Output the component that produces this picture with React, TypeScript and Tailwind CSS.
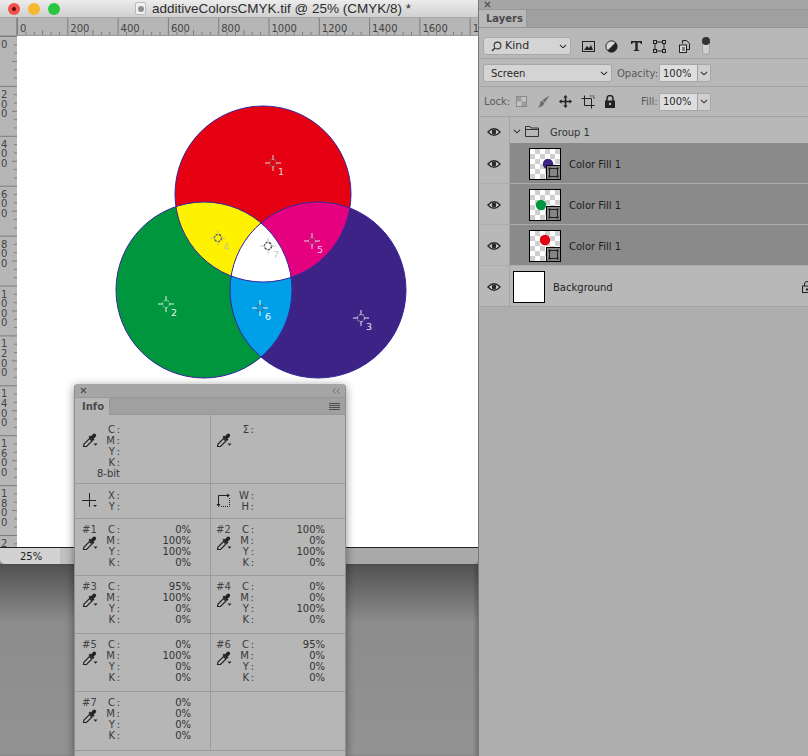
import React from "react";

const ui = "font-['DejaVu_Sans',sans-serif]";

const Eyedropper: React.FC = () => (
  <svg width="16" height="15" viewBox="0 0 16 15" className="block">
    <path d="M1.5 13.5 L2 11 L7.5 5.5 L10 8 L4.5 13.5 Z" fill="none" stroke="#222" strokeWidth="1.2" />
    <path d="M6.5 4 L8 2.5 L9 3.5 L11 1 Q12.5 0 13.7 1.2 Q15 2.5 13.5 4 L11.5 5.5 L12.5 6.5 L11 8 Z" fill="#222" />
    <path d="M11.5 10.5 H15.5 L13.5 12.8 Z" fill="#222" />
  </svg>
);

const Eye: React.FC = () => (
  <svg width="14" height="10" viewBox="0 0 14 10" className="block">
    <path d="M1 5 Q7 -1.5 13 5 Q7 11.5 1 5 Z" fill="#e4e4e4" stroke="#2a2a2a" strokeWidth="1.5" />
    <circle cx="7" cy="5" r="2.4" fill="#2a2a2a" />
  </svg>
);

const Chevron: React.FC<{ size?: number }> = ({ size = 8 }) => (
  <svg width={size} height={size * 0.6} viewBox="0 0 8 5" className="block shrink-0">
    <path d="M0.8 0.8 L4 4 L7.2 0.8" fill="none" stroke="#333" strokeWidth="1.1" />
  </svg>
);

const Checker: React.FC = () => (
  <div className="absolute inset-0 bg-white bg-[conic-gradient(#cfcfcf_25%,#ffffff_25%_50%,#cfcfcf_50%_75%,#ffffff_75%)] bg-[length:10px_10px]" />
);

const LayerRow: React.FC<{ color: string; cx: number; cy: number }> = ({ color, cx, cy }) => (
  <div className="flex h-[41px] border-b border-[#acacac]">
    <div className="w-[31px] bg-[#b8b8b8] flex items-center justify-center border-r border-[#a4a4a4] pt-[2px]">
      <Eye />
    </div>
    <div className="flex-1 bg-[#8a8a8a] flex items-center pl-[19px] pt-[1px]">
      <div className="relative w-[32px] h-[32px] border border-black overflow-hidden">
        <Checker />
        <svg width="30" height="30" viewBox="0 0 30 30" className="absolute inset-0">
          <circle cx={cx} cy={cy} r="5.2" fill={color} />
        </svg>
        <div className="absolute right-0 bottom-0 w-[14px] h-[14px] bg-[#858585] border-l border-t border-black flex items-center justify-center">
          <svg width="11" height="11" viewBox="0 0 11 11">
            <rect x="1.5" y="1.5" width="8" height="8" rx="0.5" fill="none" stroke="#222" strokeWidth="1" />
            <rect x="0.5" y="0.5" width="2" height="2" fill="#222" />
            <rect x="8.5" y="0.5" width="2" height="2" fill="#222" />
            <rect x="0.5" y="8.5" width="2" height="2" fill="#222" />
            <rect x="8.5" y="8.5" width="2" height="2" fill="#222" />
          </svg>
        </div>
      </div>
      <span className="ml-[8px] mt-[2px] text-[10px] text-[#1e1e1e]">Color Fill 1</span>
    </div>
  </div>
);

const LayersPanel: React.FC = () => (
  <div className={`${ui} w-[330px] h-full bg-[#adadad] border-l border-[#777] flex flex-col text-[#2a2a2a] shrink-0`}>
    <div className="h-[10px] bg-[#a6a6a6] pl-[5px] flex items-center border-b border-[#979797]">
      <svg width="7" height="7" viewBox="0 0 7 7">
        <path d="M1 1 L6 6 M6 1 L1 6" stroke="#555" strokeWidth="1.4" />
      </svg>
    </div>
    <div className="h-[18px] bg-[#a0a0a0] flex border-b border-[#979797]">
      <div className="w-[48px] bg-[#b8b8b8] text-[10px] leading-[12px] font-bold text-[#4a4a4a] flex items-center pl-[7px] pt-[1px] border-r border-[#979797]">
        Layers
      </div>
    </div>

    {/* filter row */}
    <div className="h-[31px] bg-[#b8b8b8] flex items-start pt-[9px] pl-[4px] border-b border-[#a2a2a2]">
      <div className="w-[88px] h-[18px] bg-[#d4d4d4] rounded-[3px] border border-[#a8a8a8] flex items-center pl-[7px] pr-[3px] text-[11px]">
        <svg width="11" height="11" viewBox="0 0 11 11" className="shrink-0">
          <circle cx="6.5" cy="4.5" r="3.4" fill="none" stroke="#333" strokeWidth="1.1" />
          <path d="M4 7 L1 10" stroke="#333" strokeWidth="1.4" />
        </svg>
        <span className="ml-[3px] flex-1">Kind</span>
        <Chevron />
      </div>
      <div className="ml-[11px] h-[18px] flex items-center">
        <svg width="13" height="11" viewBox="0 0 13 11">
          <rect x="0.5" y="0.5" width="12" height="10" fill="none" stroke="#222" />
          <path d="M2 9 L5 5 L7 7 L9 4 L11 9 Z" fill="#222" />
        </svg>
        <svg width="13" height="13" viewBox="0 0 13 13" className="ml-[10px]">
          <circle cx="6.5" cy="6.5" r="5.6" fill="#d8d8d8" stroke="#222" />
          <path d="M10.5 2.5 A5.6 5.6 0 0 1 2.5 10.5 Z" fill="#222" />
        </svg>
        <svg width="13" height="12" viewBox="0 0 13 12" className="ml-[12px]">
          <path d="M1 1 H12 V4 H11 L10 2.5 H7.7 V9.8 L9.3 10.3 V11 H3.7 V10.3 L5.3 9.8 V2.5 H3 L2 4 H1 Z" fill="#222" />
        </svg>
        <svg width="13" height="13" viewBox="0 0 13 13" className="ml-[10px]">
          <rect x="2" y="2" width="9" height="9" fill="none" stroke="#222" />
          <rect x="0.5" y="0.5" width="3" height="3" fill="#b8b8b8" stroke="#222" />
          <rect x="9.5" y="0.5" width="3" height="3" fill="#b8b8b8" stroke="#222" />
          <rect x="0.5" y="9.5" width="3" height="3" fill="#b8b8b8" stroke="#222" />
          <rect x="9.5" y="9.5" width="3" height="3" fill="#b8b8b8" stroke="#222" />
        </svg>
        <svg width="11" height="13" viewBox="0 0 11 13" className="ml-[13px]">
          <path d="M3.5 3.5 V0.5 H7.5 L10.5 3.5 V9.5 H7.5" fill="none" stroke="#222" />
          <rect x="0.5" y="5" width="7" height="7.5" fill="#d8d8d8" stroke="#222" />
          <path d="M3 8 H6 M3 10 H6" stroke="#222" />
        </svg>
      </div>
      <div className="relative ml-[12px] w-[8px] h-[18px] rounded-[4px] bg-[#cfcfcf] border border-[#a0a0a0]">
        <div className="absolute -top-[1px] -left-[1px] w-[8px] h-[8px] rounded-full bg-[#333]" />
      </div>
    </div>

    {/* blend row */}
    <div className="h-[28px] bg-[#b8b8b8] flex items-center pl-[4px] pt-[1px] border-b border-[#a2a2a2]">
      <div className="w-[129px] h-[18px] bg-[#d4d4d4] rounded-[3px] border border-[#a8a8a8] flex items-center pl-[7px] pr-[3px] text-[10px]">
        <span className="flex-1">Screen</span>
        <Chevron />
      </div>
      <span className="ml-[5px] w-[42px] text-[10px] text-[#5a5a5a]">Opacity:</span>
      <div className="w-[52px] h-[18px] flex border border-[#a8a8a8] rounded-[2px]">
        <div className="w-[37px] bg-[#dedede] text-[10px] pl-[3px] flex items-center">100%</div>
        <div className="flex-1 bg-[#cfcfcf] border-l border-[#a0a0a0] flex items-center justify-center">
          <Chevron />
        </div>
      </div>
    </div>

    {/* lock row */}
    <div className="h-[30px] bg-[#b8b8b8] flex items-center pl-[5px] border-b border-[#a2a2a2] text-[10px]">
      <span className="w-[32px] text-[#5a5a5a]">Lock:</span>
      <svg width="11" height="11" viewBox="0 0 11 11">
        <rect x="0.5" y="0.5" width="10" height="10" fill="#c4c4c4" stroke="#8a8a8a" />
        <path d="M1 1 H5.5 V5.5 H1 Z M5.5 5.5 H10 V10 H5.5 Z" fill="#9c9c9c" />
      </svg>
      <svg width="13" height="13" viewBox="0 0 13 13" className="ml-[10px]">
        <path d="M12.5 0.5 L5.5 5 L8 7.5 Z" fill="#6e6e6e" />
        <path d="M5 5.5 L7.5 8 Q6 12 0.5 12.5 Q3 10.5 3 8.5 Q3 6.5 5 5.5 Z" fill="#6e6e6e" />
      </svg>
      <svg width="13" height="13" viewBox="0 0 13 13" className="ml-[9px]">
        <path d="M6.5 0 L8.7 2.5 H7.3 V5.7 H10.5 V4.3 L13 6.5 L10.5 8.7 V7.3 H7.3 V10.5 H8.7 L6.5 13 L4.3 10.5 H5.7 V7.3 H2.5 V8.7 L0 6.5 L2.5 4.3 V5.7 H5.7 V2.5 H4.3 Z" fill="#222" />
      </svg>
      <svg width="14" height="14" viewBox="0 0 14 14" className="ml-[9px]">
        <path d="M3.5 0.5 V10.5 H13.5 M0.5 3.5 H10.5 V13.5" fill="none" stroke="#222" />
        <path d="M9 1 L13 1 L13 4" fill="none" stroke="#222" strokeDasharray="1.5 1" />
      </svg>
      <svg width="12" height="13" viewBox="0 0 12 13" className="ml-[9px]">
        <path d="M3 6 V3.5 A3 3 0 0 1 9 3.5 V6" fill="none" stroke="#222" strokeWidth="1.5" />
        <rect x="1" y="5.5" width="10" height="7.5" fill="#222" />
        <circle cx="6" cy="9" r="1.2" fill="#b8b8b8" />
      </svg>
      <span className="ml-[25px] w-[18px] text-[#5a5a5a]">Fill:</span>
      <div className="w-[52px] h-[18px] flex border border-[#a8a8a8] rounded-[2px]">
        <div className="w-[37px] bg-[#dedede] pl-[3px] flex items-center">100%</div>
        <div className="flex-1 bg-[#cfcfcf] border-l border-[#a0a0a0] flex items-center justify-center">
          <Chevron />
        </div>
      </div>
    </div>

    {/* group */}
    <div className="flex h-[26px]">
      <div className="w-[31px] bg-[#b8b8b8] flex items-center justify-center border-r border-[#a4a4a4] pt-[3px]">
        <Eye />
      </div>
      <div className="flex-1 bg-[#b8b8b8] flex items-center pl-[3px] pt-[3px]">
        <Chevron />
        <svg width="14" height="11" viewBox="0 0 14 11" className="ml-[4px]">
          <path d="M0.5 10.5 V0.5 H5 L6 2 H13.5 V10.5 Z M0.5 3.5 H13.5" fill="none" stroke="#333" />
        </svg>
        <span className="ml-[11px] mt-[1px] text-[10px] text-[#333]">Group 1</span>
      </div>
    </div>

    <LayerRow color="#3c2385" cx={18} cy={15} />
    <LayerRow color="#00963e" cx={11} cy={15} />
    <LayerRow color="#e50012" cx={15} cy={9} />

    <div className="flex h-[41px] bg-[#b8b8b8] border-b border-[#a4a4a4]">
      <div className="w-[31px] flex items-center justify-center border-r border-[#a4a4a4] pt-[2px]">
        <Eye />
      </div>
      <div className="flex-1 flex items-center pl-[3px] pt-[1px] relative">
        <div className="w-[32px] h-[32px] bg-white border border-black" />
        <span className="ml-[8px] mt-[2px] text-[10px] text-[#1e1e1e]">Background</span>
        <svg width="10" height="12" viewBox="0 0 10 12" className="absolute right-[-4px] top-[15px]">
          <path d="M2.5 5 V3 A2.5 2.5 0 0 1 7.5 3 V5" fill="none" stroke="#222" />
          <rect x="0.5" y="5" width="9" height="6.5" fill="none" stroke="#222" />
          <rect x="4" y="7.5" width="2" height="2" fill="#222" />
        </svg>
      </div>
    </div>
  </div>
);

const marks = [
  { n: 1, x: 273, y: 163, c: "#f0d0d0", d: "#7a5a5a" },
  { n: 2, x: 166, y: 304, c: "#e8f4ec", d: "#5cb080" },
  { n: 3, x: 361, y: 318, c: "#e4e0f0", d: "#8a86a0" },
  { n: 4, x: 218, y: 238, c: "#c9c48c", d: "#555" },
  { n: 5, x: 312, y: 241, c: "#f2cfe2", d: "#8a5a78" },
  { n: 6, x: 260, y: 308, c: "#eef8ff", d: "#2f6f90" },
  { n: 7, x: 268, y: 246, c: "#c8c8c8", d: "#444" },
];

const Rgb: React.FC = () => (
  <svg viewBox="17 36 461 511" width="461" height="511" className="block">
    <defs>
      <clipPath id="r"><circle cx="263" cy="194" r="88" /></clipPath>
      <clipPath id="g"><circle cx="204" cy="290" r="88" /></clipPath>
      <clipPath id="b"><circle cx="318" cy="290" r="88" /></clipPath>
    </defs>
    <circle cx="263" cy="194" r="88" fill="#e50012" />
    <circle cx="204" cy="290" r="88" fill="#00963e" />
    <circle cx="318" cy="290" r="88" fill="#3c2385" />
    <g clipPath="url(#r)">
      <circle cx="204" cy="290" r="88" fill="#fff200" />
      <circle cx="318" cy="290" r="88" fill="#e5007f" />
    </g>
    <g clipPath="url(#g)"><g clipPath="url(#b)">
      <rect x="200" y="270" width="120" height="100" fill="#00a0e9" />
    </g></g>
    <g clipPath="url(#r)"><g clipPath="url(#g)"><circle cx="318" cy="290" r="88" fill="#ffffff" /></g></g>
    <g fill="none" stroke="#38269c" strokeWidth="1">
      <circle cx="263" cy="194" r="88" />
      <circle cx="204" cy="290" r="88" />
      <circle cx="318" cy="290" r="88" />
    </g>
    {marks.map((m) => (
      <g key={m.n}>
        <circle cx={m.x} cy={m.y} r="3.6" fill="none" stroke={m.d} strokeWidth="1.4" strokeDasharray="2.5 1" />
        <path
          d={`M${m.x - 8} ${m.y} H${m.x - 3} M${m.x + 3} ${m.y} H${m.x + 8} M${m.x} ${m.y - 8} V${m.y - 3} M${m.x} ${m.y + 3} V${m.y + 8}`}
          stroke={m.c}
          strokeWidth="1"
        />
        <text x={m.x + 5} y={m.y + 12} fontSize="9.5" fill={m.c} fontFamily="'DejaVu Sans',sans-serif">
          {m.n}
        </text>
      </g>
    ))}
  </svg>
);

const TopRuler: React.FC = () => {
  const labels = [0, 200, 400, 600, 800, 1000, 1200, 1400, 1600, 1800];
  const step = 50.3;
  return (
    <svg width="461" height="17" viewBox="0 0 461 17" className="block">
      {labels.map((l, i) => (
        <g key={l}>
          <path d={`M${0.5 + i * step} 0 V17`} stroke="#7e7e7e" />
          {[1, 2, 3, 4, 5].map((t) => (
            <path key={t} d={`M${0.5 + i * step + (t * step) / 6} ${t === 3 ? 12 : 14} V17`} stroke="#7e7e7e" />
          ))}
          <text x={3 + i * step} y="14" fontSize="10" fill="#444" fontFamily="'DejaVu Sans',sans-serif">
            {l}
          </text>
        </g>
      ))}
    </svg>
  );
};

const LeftRuler: React.FC = () => {
  const labels = ["0", "200", "400", "600", "800", "1000", "1200", "1400", "1600", "1800", "2"];
  const step = 49.9;
  return (
    <svg width="17" height="511" viewBox="0 0 17 511" className="block overflow-visible">
      {labels.map((l, i) => (
        <g key={i}>
          <path d={`M0 ${0.5 + i * step} H17`} stroke="#7e7e7e" />
          {[1, 2, 3, 4, 5].map((t) => (
            <path key={t} d={`M${t === 3 ? 12 : 14} ${0.5 + i * step + (t * step) / 6} H17`} stroke="#7e7e7e" />
          ))}
          {l.split("").map((d, j) => (
            <text key={j} x="1" y={12 + i * step + j * 9.6} fontSize="10" fill="#444" fontFamily="'DejaVu Sans',sans-serif">
              {d}
            </text>
          ))}
        </g>
      ))}
    </svg>
  );
};

const DocWindow: React.FC = () => (
  <div className="h-[564px] flex flex-col bg-[#a9a9a9] rounded-b-[5px] overflow-hidden shrink-0">
    <div className="relative h-[18px] bg-gradient-to-b from-[#ececec] to-[#d0d0d0] flex items-center border-b border-[#aaa]">
      <div className="flex items-center gap-[8px] pl-[8px]">
        <span className="w-[12px] h-[12px] rounded-full bg-[#f2514b] flex items-center justify-center">
          <span className="w-[4px] h-[4px] rounded-full bg-[#5a0a08]" />
        </span>
        <span className="w-[12px] h-[12px] rounded-full bg-[#f6b82e]" />
        <span className="w-[12px] h-[12px] rounded-full bg-[#29c73f]" />
      </div>
      <div className="ml-[75px] w-[11px] h-[13px] bg-[#f0f0f0] border border-[#bbb] rounded-[2px] flex items-center justify-center">
        <span className="w-[6px] h-[6px] rounded-full bg-[#8e8e8e]" />
      </div>
      <span className="ml-[6px] mt-[1px] font-['Liberation_Sans',sans-serif] text-[13.5px] text-[#2b2b2b] whitespace-nowrap">
        additiveColorsCMYK.tif @ 25% (CMYK/8) *
      </span>
    </div>
    <div className="h-[18px] flex bg-[#b6b6b6] border-b border-[#9a9a9a]">
      <div className="w-[17px] shrink-0 bg-[#b6b6b6] border-r border-[#8e8e8e]" />
      <TopRuler />
    </div>
    <div className="flex h-[511px]">
      <div className="w-[17px] shrink-0 bg-[#b6b6b6]">
        <LeftRuler />
      </div>
      <div className="flex-1 bg-white">
        <Rgb />
      </div>
    </div>
    <div className="flex-1 flex border-t border-[#222]">
      <div className="w-[60px] bg-[#d2d2d2] pl-[20px] flex items-center text-[10px] text-[#222] font-['DejaVu_Sans',sans-serif]">
        25%
      </div>
      <div className="w-[14px] bg-[#c0c0c0]" />
    </div>
  </div>
);

const row = "text-[10px] leading-[11px] text-[#3a3a3a]";

const Vals: React.FC<{ vals: string[] }> = ({ vals }) => (
  <div className={`${row} flex flex-col items-end text-[#333]`}>
    {vals.map((v, i) => (
      <span key={i}>{v}</span>
    ))}
  </div>
);

const Labels: React.FC<{ items: string[] }> = ({ items }) => (
  <div className={`${row} w-[15px] flex flex-col items-end whitespace-nowrap [word-spacing:-1.5px]`}>
    {items.map((v) => (
      <span key={v}>{v}</span>
    ))}
  </div>
);

const Sample: React.FC<{ n?: number; vals?: string[]; side: "l" | "r" }> = ({ n, vals, side }) => (
  <div
    className={
      side === "l"
        ? "w-[136px] border-r border-[#9c9c9c] pl-[7px] pt-[5px] flex"
        : "flex-1 pl-[5px] pt-[5px] flex"
    }
  >
    {n !== undefined && (
      <>
        <div className="w-[23px]">
          <div className={`${row} text-[#444]`}>#{n}</div>
          <div className="mt-[1px]"><Eyedropper /></div>
        </div>
        <Labels items={["C :", "M :", "Y :", "K :"]} />
        <div className="w-[71px]">
          <Vals vals={vals ?? []} />
        </div>
      </>
    )}
  </div>
);

const samples: { n: number; vals: string[] }[] = [
  { n: 1, vals: ["0%", "100%", "100%", "0%"] },
  { n: 2, vals: ["100%", "0%", "100%", "0%"] },
  { n: 3, vals: ["95%", "100%", "0%", "0%"] },
  { n: 4, vals: ["0%", "0%", "100%", "0%"] },
  { n: 5, vals: ["0%", "100%", "0%", "0%"] },
  { n: 6, vals: ["95%", "0%", "0%", "0%"] },
];

const InfoPanel: React.FC = () => (
  <div className={`${ui} absolute left-[74px] top-[384px] w-[272px] h-[372px] bg-[#b6b6b6] rounded-t-[4px] border-x border-[#8e8e8e] flex flex-col shadow-[0_2px_10px_rgba(0,0,0,0.45)]`}>
    <div className="h-[14px] bg-[#a6a6a6] rounded-t-[4px] flex items-center justify-between px-[5px] border-b border-[#979797]">
      <svg width="7" height="7" viewBox="0 0 7 7">
        <path d="M1 1 L6 6 M6 1 L1 6" stroke="#555" strokeWidth="1.4" />
      </svg>
      <svg width="8" height="6" viewBox="0 0 8 6">
        <path d="M3.5 0.5 L1 3 L3.5 5.5 M7.5 0.5 L5 3 L7.5 5.5" fill="none" stroke="#666" strokeWidth="0.9" />
      </svg>
    </div>
    <div className="h-[17px] bg-[#a0a0a0] flex items-center justify-between border-b border-[#979797] pr-[5px]">
      <div className="w-[35px] h-[17px] bg-[#b6b6b6] text-[10px] font-bold text-[#4a4a4a] flex items-center pl-[7px] border-r border-[#979797]">
        Info
      </div>
      <svg width="11" height="7" viewBox="0 0 11 7">
        <path d="M0 0.5 H11 M0 2.5 H11 M0 4.5 H11 M0 6.5 H11" stroke="#444" strokeWidth="0.9" />
      </svg>
    </div>

    <div className="h-[69px] flex border-b border-[#9c9c9c]">
      <div className="w-[136px] border-r border-[#9c9c9c] pl-[7px] pt-[9px] flex">
        <div className="w-[23px] pt-[9px]"><Eyedropper /></div>
        <Labels items={["C :", "M :", "Y :", "K :", "8-bit"]} />
      </div>
      <div className="flex-1 pl-[5px] pt-[9px] flex">
        <div className="w-[23px] pt-[9px]"><Eyedropper /></div>
        <Labels items={["Σ :"]} />
      </div>
    </div>

    <div className="h-[35px] flex border-b border-[#9c9c9c]">
      <div className="w-[136px] border-r border-[#9c9c9c] pl-[7px] pt-[6px] flex">
        <div className="w-[23px] pt-[3px]">
          <svg width="16" height="15" viewBox="0 0 16 15" className="block">
            <path d="M7.5 0 V14 M0 7.5 H14" stroke="#222" strokeWidth="1" />
            <path d="M11 12 H15 L13 14 Z" fill="#222" />
          </svg>
        </div>
        <Labels items={["X :", "Y :"]} />
      </div>
      <div className="flex-1 pl-[5px] pt-[6px] flex">
        <div className="w-[23px] pt-[3px]">
          <svg width="16" height="15" viewBox="0 0 16 15" className="block">
            <path d="M2.5 13 V2.5 H12" fill="none" stroke="#222" />
            <path d="M13.5 5 V13.5 H5" fill="none" stroke="#222" strokeDasharray="1 1" />
            <path d="M11 0.5 L14 2.5 L11 4.5 Z M0.5 11 L2.5 14 L4.5 11 Z" fill="#222" />
          </svg>
        </div>
        <Labels items={["W :", "H :"]} />
      </div>
    </div>

    {[0, 2, 4].map((i) => (
      <div key={i} className={`${i === 0 ? "h-[57px]" : "h-[58px]"} flex border-b border-[#9c9c9c]`}>
        <Sample side="l" n={samples[i].n} vals={samples[i].vals} />
        <Sample side="r" n={samples[i + 1].n} vals={samples[i + 1].vals} />
      </div>
    ))}
    <div className="h-[59px] flex border-b border-[#9c9c9c]">
      <Sample side="l" n={7} vals={["0%", "0%", "0%", "0%"]} />
      <Sample side="r" />
    </div>
  </div>
);

export default function App() {
  return (
    <div className="relative w-[808px] h-[756px] overflow-hidden flex bg-[#939393]">
      <div className="w-[478px] shrink-0 flex flex-col">
        <DocWindow />
        <div className="flex-1 bg-gradient-to-b from-[#525252] via-[#8c8c8c] via-30% to-[#939393] shadow-[inset_-3px_0_3px_rgba(0,0,0,0.18)]" />
      </div>
      <LayersPanel />
      <InfoPanel />
    </div>
  );
}
